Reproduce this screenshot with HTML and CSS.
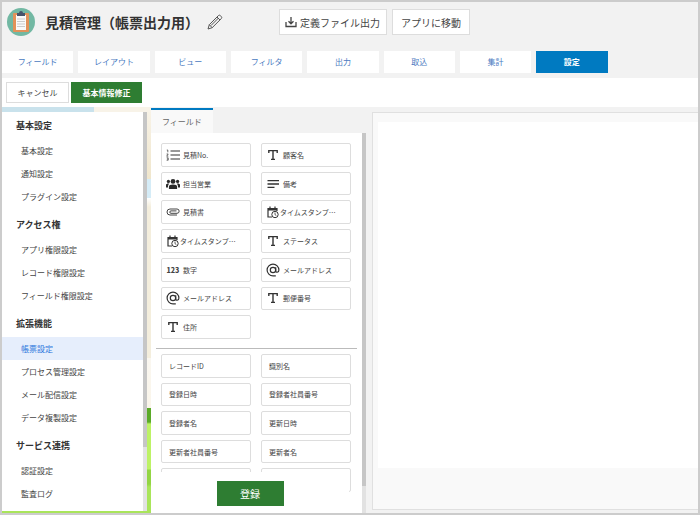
FILE: index.html
```html
<!DOCTYPE html>
<html lang="ja">
<head>
    <meta charset="UTF-8">
    <meta name="viewport" content="width=device-width, initial-scale=1.0">
    <title>見積管理（帳票出力用）</title>
    <link rel="stylesheet" href="styles.css">
</head>
<body>
    <!-- shared icons -->
    <svg class="sprite" aria-hidden="true">
        <symbol id="i-text" viewBox="0 0 14 14"><path d="M2.8 5V2.6h8.4V5M7 2.6v8.8M5 11.4h4" fill="none" stroke="#333" stroke-width="1.4"/></symbol>
        <symbol id="i-list" viewBox="0 0 14 14"><path d="M4.5 3H14M4.5 7H14M4.5 11H14" fill="none" stroke="#333" stroke-width="1.2"/><path d="M.8 2h1v2.3M.6 6h1.6L.7 8.2h1.6M.6 9.8h1.6v2.4H.6M1 11h1.2" fill="none" stroke="#333" stroke-width=".7"/></symbol>
        <symbol id="i-group" viewBox="0 0 14 14"><g fill="#2b2b2b"><circle cx="7" cy="4.4" r="2.4"/><circle cx="2.4" cy="4.4" r="1.6"/><circle cx="11.6" cy="4.4" r="1.6"/><path d="M2.9 12V9.8C2.900 8.300 4.400 7.500 7 7.500s4.100.8 4.100 2.300V12zM0 10.500V8c0-1.200 1.300-1.700 3.400-1.500-1 .8-1.500 2-1.400 4zM14 10.500V8c0-1.200-1.300-1.700-3.400-1.500 1 .8 1.500 2 1.400 4z"/></g></symbol>
        <symbol id="i-lines" viewBox="0 0 14 14"><path d="M1.500 3.600H13M1.500 7H13M1.500 10.400h7" fill="none" stroke="#333" stroke-width="1.300"/></symbol>
        <symbol id="i-clip" viewBox="0 0 14 14"><path d="M11 10H4a3 3 0 0 1 0-6h7a2.100 2.100 0 0 1 0 4.300H5a1.200 1.200 0 0 1 0-2.400h5.500" fill="none" stroke="#444" stroke-width="1"/></symbol>
        <symbol id="i-date" viewBox="0 0 14 14"><path d="M6 12H2V3.500h9V6M4 1.500v2M9 1.500v2" fill="none" stroke="#333" stroke-width="1.200"/><path d="M2 3h9v2.500H2z" fill="#333"/><circle cx="9" cy="9.500" r="3.200" fill="#fff" stroke="#333"/><path d="M9 7.500v2.200l1.300.8" fill="none" stroke="#333" stroke-width=".8"/></symbol>
        <symbol id="i-at" viewBox="0 0 14 14"><circle cx="7" cy="7" r="2.700" fill="none" stroke="#333" stroke-width="1.200"/><path d="M9.700 4.300v3.600c0 1.900 3.200 1.900 3.200-.9A5.900 5.900 0 1 0 7 12.900h2.800" fill="none" stroke="#333" stroke-width="1.200"/></symbol>
    </svg>

    <header>
        <div class="titleRow">
            <svg class="logo" viewBox="0 0 28 28">
                <circle cx="14" cy="14" r="14" fill="#72b8a3"/>
                <rect x="6" y="5" width="16" height="19" rx="1" fill="#e2925a"/>
                <path d="M9 7h10v15H9z" fill="#fafafa"/>
                <path d="M10 5h2a2 2 0 0 1 4 0h2v3h-8z" fill="#47546b"/>
                <path d="M10 11h8M10 13.500h8M10 16h8M10 18.500h8" stroke="#ccc" stroke-width="1"/>
            </svg>
            <h1>見積管理（帳票出力用）</h1>
            <svg class="pencil" viewBox="0 0 16 16">
                <path d="M1 15l1.300-4.300L11.500 1.500q1-.8 2 .2l.7.8q1 1 .2 2L5.200 13.700zM2.300 10.700l2.900 3M10 3l3 3M4 11.500L11.500 4" fill="none" stroke="#555" stroke-width="1"/>
            </svg>
            <div class="actions">
                <button class="btn btnIcon">
                    <svg viewBox="0 0 12 12"><path d="M1 6v4.500h10V6M6 1v6.500M3.500 5.300L6 7.800l2.500-2.500" fill="none" stroke="#444" stroke-width="1.300"/></svg>
                    定義ファイル出力
                </button>
                <button class="btn">アプリに移動</button>
            </div>
        </div>
        <nav class="tabs">
            <a href="#">フィールド</a>
            <a href="#">レイアウト</a>
            <a href="#">ビュー</a>
            <a href="#">フィルタ</a>
            <a href="#">出力</a>
            <a href="#">取込</a>
            <a href="#">集計</a>
            <a href="#" class="active">設定</a>
        </nav>
    </header>

    <div class="toolbar">
        <button class="cancel">キャンセル</button>
        <button class="primary">基本情報修正</button>
    </div>

    <main>
        <div class="sidebarWrap">
            <aside class="sidebar">
                <div class="menu">
                    <h2>基本設定</h2>
                    <a href="#">基本設定</a>
                    <a href="#">通知設定</a>
                    <a href="#">プラグイン設定</a>
                    <h2>アクセス権</h2>
                    <a href="#">アプリ権限設定</a>
                    <a href="#">レコード権限設定</a>
                    <a href="#">フィールド権限設定</a>
                    <h2>拡張機能</h2>
                    <a href="#" class="active">帳票設定</a>
                    <a href="#">プロセス管理設定</a>
                    <a href="#">メール配信設定</a>
                    <a href="#">データ複製設定</a>
                    <h2>サービス連携</h2>
                    <a href="#">認証設定</a>
                    <a href="#">監査ログ</a>
                </div>
                <div class="track"><div class="thumb menuThumb"></div></div>
            </aside>
        </div>

        <section class="fields">
            <button class="fieldTab">フィールド</button>
            <div class="fieldBody">
                <div class="fieldMain">
                    <div class="fieldList">
                        <div class="grid gridTop">
                            <button class="item"><svg><use href="#i-list"/></svg>見積No.</button>
                            <button class="item"><svg><use href="#i-text"/></svg>顧客名</button>
                            <button class="item"><svg><use href="#i-group"/></svg>担当営業</button>
                            <button class="item"><svg><use href="#i-lines"/></svg>備考</button>
                            <button class="item"><svg><use href="#i-clip"/></svg>見積書</button>
                            <button class="item date"><svg><use href="#i-date"/></svg>タイムスタンプ…</button>
                            <button class="item date"><svg><use href="#i-date"/></svg>タイムスタンプ…</button>
                            <button class="item"><svg><use href="#i-text"/></svg>ステータス</button>
                            <button class="item"><span class="num">123</span>数字</button>
                            <button class="item"><svg><use href="#i-at"/></svg>メールアドレス</button>
                            <button class="item"><svg><use href="#i-at"/></svg>メールアドレス</button>
                            <button class="item"><svg><use href="#i-text"/></svg>郵便番号</button>
                            <button class="item"><svg><use href="#i-text"/></svg>住所</button>
                        </div>
                        <hr>
                        <div class="grid gridBottom">
                            <button class="item">レコードID</button>
                            <button class="item">識別名</button>
                            <button class="item">登録日時</button>
                            <button class="item">登録者社員番号</button>
                            <button class="item">登録者名</button>
                            <button class="item">更新日時</button>
                            <button class="item">更新者社員番号</button>
                            <button class="item">更新者名</button>
                            <button class="item"></button>
                            <button class="item"></button>
                        </div>
                    </div>
                    <div class="submitBar">
                        <button class="submit">登録</button>
                    </div>
                </div>
                <div class="track"><div class="thumb fieldThumb"></div></div>
            </div>
        </section>

        <section class="canvas">
            <div class="paper"></div>
        </section>
    </main>
</body>
</html>
```

FILE: styles.css
```css
*{
    margin: 0;
    padding: 0;
    box-sizing: border-box;
}
body{
    height: 100vh;
    display: flex;
    flex-direction: column;
    border: 2px solid #ccc;
    background-color: #f2f2f2;
    color: #444;
    font-family: "Noto Sans CJK JP", sans-serif;
    font-size: 8px;
    overflow: hidden;
}
a{
    text-decoration: none;
    color: inherit;
}
button{
    font: inherit;
    color: inherit;
    cursor: pointer;
    white-space: nowrap;
}
.sprite{
    display: none;
}

/* header */
.titleRow{
    display: flex;
    align-items: center;
    height: 40px;
    padding-left: 5px;
}
.logo{
    width: 28px;
    height: 28px;
}
h1{
    color: #333;
    font-size: 14px;
    line-height: 20px;
    margin-left: 10px;
}
.pencil{
    width: 16px;
    height: 16px;
    margin-left: 8px;
}
.actions{
    display: flex;
    gap: 5px;
    margin-left: 56px;
}
.btn{
    height: 26px;
    padding: 0 8px;
    border: 1px solid #ddd;
    background-color: #fff;
    font-size: 10px;
}
.btnIcon{
    display: flex;
    align-items: center;
    gap: 3px;
    padding: 0 6px 0 5px;
}
.btnIcon svg{
    width: 12px;
    height: 12px;
}
.tabs{
    display: grid;
    grid-template-columns: repeat(8, 1fr);
    gap: 5px;
    width: 87%;
    margin: 9px 0 5px;
}
.tabs a{
    height: 22px;
    line-height: 22px;
    background-color: #fff;
    color: #4a7abf;
    text-align: center;
}
.tabs .active{
    background-color: #007ac1;
    color: #fff;
    font-weight: bold;
}

.toolbar{
    display: flex;
    gap: 2px;
    padding: 4px;
    background-color: #fff;
}
.toolbar button{
    height: 21px;
    padding: 0 10px;
}
.toolbar .cancel{
    min-width: 63px;
    border: 1px solid #ddd;
    background-color: #fff;
}
.toolbar .primary{
    min-width: 71px;
    border: 0;
    background-color: #2e7d32;
    color: #fff;
    font-weight: bold;
}

main{
    flex: 1;
    display: flex;
    min-height: 0;
}
.track{
    width: 4px;
    background-color: #e2e2e2;
}
.thumb{
    background-color: #c6c6c6;
}

/* side menu, lies on the wallpaper */
.sidebarWrap{
    width: 149px;
    padding: 5px 4px 2px 0;
    background-image:
        linear-gradient(90deg, #c9e2ec 92px, #f8f3e8 92px),
        linear-gradient(#f8f3e8 0, #f0e6cc 72px, #d5ecf7 72px, #d5ecf7 91px, #fff 91px, #f4eedd 100px, #f4eedd 251px, #faf7f0 251px, #faf5ea 301px, #5aaa28 301px, #5aaa28 315px, #bdf266 317px, #bdf266 362px, #93d544 363px, #93d544 377px, #a9e55a 380px);
    background-size: 100% 5px, 100% 100%;
    background-repeat: no-repeat;
}
.sidebar{
    display: flex;
    height: 100%;
    background-color: #fff;
    overflow: hidden;
}
.menu{
    flex: 1;
}
.menu h2{
    padding-left: 14px;
    margin-top: 3px;
    color: #333;
    font-size: 9px;
    line-height: 27px;
}
.menu h2:first-child{
    margin-top: 0;
}
.menu a{
    display: block;
    padding-left: 19px;
    line-height: 23px;
}
.menu .active{
    background-color: #e6eefc;
    color: #2f78dc;
}
.menuThumb{
    height: 84%;
}

/* field palette */
.fields{
    display: flex;
    flex-direction: column;
    align-items: flex-start;
    width: 215px;
    padding-top: 1px;
}
.fieldTab{
    height: 25px;
    padding: 0 11px;
    border: 0;
    border-top: 2px solid #007ac1;
    background-color: #f9f9f9;
    color: #666;
}
.fieldBody{
    flex: 1;
    display: flex;
    width: 100%;
    min-height: 0;
    background-color: #fff;
}
.fieldMain{
    flex: 1;
    display: flex;
    flex-direction: column;
}
.fieldList{
    flex: 1;
    min-height: 0;
    padding: 10px 5px 0;
    overflow: hidden;
}
.grid{
    display: grid;
    grid-template-columns: 1fr 1fr;
    gap: 5px 10px;
    padding: 0 6px 0 5px;
}
.gridTop{
    grid-template-rows: repeat(7, 1fr);
    height: 196px;
}
.gridBottom{
    grid-template-rows: repeat(5, 1fr);
    height: 138px;
}
hr{
    height: 1px;
    margin: 9px 0 5px;
    border: 0;
    background-color: #bbb;
}
.item{
    display: flex;
    align-items: center;
    gap: 3px;
    padding-left: 7px;
    border: 1px solid #ddd;
    border-radius: 2px;
    background-color: #fff;
    font-size: 7px;
    overflow: hidden;
}
.item svg{
    width: 14px;
    height: 14px;
    flex: none;
}
.gridTop .item{
    padding-left: 4px;
}
.gridTop .date{
    gap: 0;
}
.num{
    width: 14px;
    font-weight: 900;
}
.submitBar{
    margin: -20px 13px 0 0;
    padding: 9px 0 7px;
    background-color: #fff;
    text-align: center;
    position: relative;
}
.submit{
    width: 67px;
    height: 25px;
    border: 0;
    background-color: #2e7d32;
    color: #fff;
    font-size: 10px;
    vertical-align: top;
}
.fieldThumb{
    height: 93%;
}

.canvas{
    flex: 1;
    margin: 5px 0 3px 6px;
    padding: 9px 0 41px 5px;
    border: 1px solid #e0e0e0;
    border-right: 0;
    background-color: #f9f9f9;
}
.paper{
    height: 100%;
    background-color: #fff;
}
```
